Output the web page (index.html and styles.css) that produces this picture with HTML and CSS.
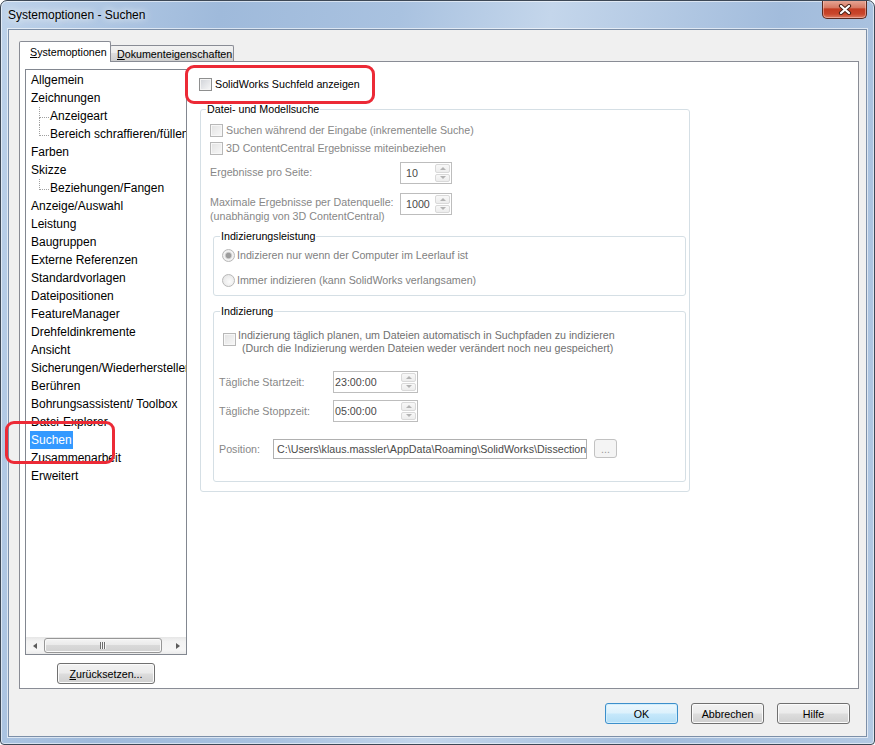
FILE: index.html
```html
<!DOCTYPE html>
<html lang="de">

<head>
  <meta charset="UTF-8">
  <title>Systemoptionen - Suchen</title>
  <link rel="stylesheet" href="styles.css">
</head>

<body>
  <div class="window">
    <div class="titlebar">
      <span class="title">Systemoptionen - Suchen</span>
      <button class="close-btn">
        <svg width="16" height="11" viewBox="0 0 16 11">
          <path d="M4 2 L12 9 M12 2 L4 9" stroke="#4b2318" stroke-width="4.2" stroke-linecap="round" fill="none"/>
          <path d="M4 2 L12 9 M12 2 L4 9" stroke="#ffffff" stroke-width="2.2" stroke-linecap="round" fill="none"/>
        </svg>
      </button>
    </div>

    <div class="client">
      <div class="tabs">
        <div class="tab tab-active"><u>S</u>ystemoptionen</div>
        <div class="tab tab-other"><u>D</u>okumenteigenschaften</div>
      </div>

      <div class="panel">
        <div class="nav">
          <div class="tree">
            <ul class="tree-list">
              <li>Allgemein</li>
              <li>Zeichnungen</li>
              <li class="tree-child has-next">Anzeigeart</li>
              <li class="tree-child">Bereich schraffieren/füllen</li>
              <li>Farben</li>
              <li>Skizze</li>
              <li class="tree-child">Beziehungen/Fangen</li>
              <li>Anzeige/Auswahl</li>
              <li>Leistung</li>
              <li>Baugruppen</li>
              <li>Externe Referenzen</li>
              <li>Standardvorlagen</li>
              <li>Dateipositionen</li>
              <li>FeatureManager</li>
              <li>Drehfeldinkremente</li>
              <li>Ansicht</li>
              <li>Sicherungen/Wiederherstellen</li>
              <li>Berühren</li>
              <li>Bohrungsassistent/ Toolbox</li>
              <li>Datei-Explorer</li>
              <li><span class="tree-selected">Suchen</span></li>
              <li>Zusammenarbeit</li>
              <li>Erweitert</li>
            </ul>
            <div class="hscroll">
              <span class="hs-arrow hs-left"></span>
              <div class="hs-track">
                <div class="hs-thumb"><span class="hs-grip"></span></div>
              </div>
              <span class="hs-arrow hs-right"></span>
            </div>
          </div>
          <button class="btn reset-btn"><u>Z</u>urücksetzen...</button>
        </div>

        <div class="page">
          <div class="check-row">
            <span class="cb"></span>
            <span>SolidWorks Suchfeld anzeigen</span>
          </div>

          <fieldset class="group group-outer">
            <legend class="group-title">Datei- und Modellsuche</legend>
            <div class="group-body outer-body">
              <div class="opt-row first-opt">
                <span class="cb cb-off"></span>
                <span>Suchen während der Eingabe (inkrementelle Suche)</span>
              </div>
              <div class="opt-row">
                <span class="cb cb-off"></span>
                <span>3D ContentCentral Ergebnisse miteinbeziehen</span>
              </div>

              <div class="field-row row-results">
                <span class="field-label label-wide">Ergebnisse pro Seite:</span>
                <div class="spin spin-small">
                  <span class="spin-value">10</span>
                  <span class="spin-btns"><span class="spin-btn spin-up"></span><span class="spin-btn spin-down"></span></span>
                </div>
              </div>
              <div class="field-row row-max">
                <span class="field-label label-wide label-two">Maximale Ergebnisse per Datenquelle:<br>(unabhängig von 3D ContentCentral)</span>
                <div class="spin spin-small">
                  <span class="spin-value">1000</span>
                  <span class="spin-btns"><span class="spin-btn spin-up"></span><span class="spin-btn spin-down"></span></span>
                </div>
              </div>

              <fieldset class="group group-inner group-perf">
                <legend class="group-title inner-title">Indizierungsleistung</legend>
                <div class="group-body perf-body">
                  <div class="opt-row radio-row first-radio">
                    <span class="rb rb-on"></span>
                    <span>Indizieren nur wenn der Computer im Leerlauf ist</span>
                  </div>
                  <div class="opt-row radio-row second-radio">
                    <span class="rb"></span>
                    <span>Immer indizieren (kann SolidWorks verlangsamen)</span>
                  </div>
                </div>
              </fieldset>

              <fieldset class="group group-inner group-index">
                <legend class="group-title inner-title">Indizierung</legend>
                <div class="group-body index-body">
                  <div class="sched-row">
                    <span class="cb cb-off"></span>
                    <span class="sched-text">Indizierung täglich planen, um Dateien automatisch in Suchpfaden zu indizieren<br><span class="sched-second">(Durch die Indizierung werden Dateien weder verändert noch neu gespeichert)</span></span>
                  </div>
                  <div class="field-row row-start">
                    <span class="field-label label-time">Tägliche Startzeit:</span>
                    <div class="spin spin-time">
                      <span class="spin-value">23:00:00</span>
                      <span class="spin-btns"><span class="spin-btn spin-up"></span><span class="spin-btn spin-down"></span></span>
                    </div>
                  </div>
                  <div class="field-row row-stop">
                    <span class="field-label label-time">Tägliche Stoppzeit:</span>
                    <div class="spin spin-time">
                      <span class="spin-value">05:00:00</span>
                      <span class="spin-btns"><span class="spin-btn spin-up"></span><span class="spin-btn spin-down"></span></span>
                    </div>
                  </div>
                  <div class="field-row row-pos">
                    <span class="field-label label-pos">Position:</span>
                    <div class="path-box">C:\Users\klaus.massler\AppData\Roaming\SolidWorks\Dissection</div>
                    <button class="small-btn">...</button>
                  </div>
                </div>
              </fieldset>
            </div>
          </fieldset>
        </div>
      </div>

      <div class="footer">
        <button class="btn footer-btn btn-default">OK</button>
        <button class="btn footer-btn">Abbrechen</button>
        <button class="btn footer-btn">Hilfe</button>
      </div>
    </div>

    <div class="mark mark-search"></div>
    <div class="mark mark-tree"></div>
  </div>
</body>

</html>
```

FILE: styles.css
```css
* {
  margin: 0;
  padding: 0;
  box-sizing: border-box;
}

body {
  font-family: "Liberation Sans", Arial, sans-serif;
  font-size: 10.7px;
  color: #000000;
  background: #ffffff;
}

button {
  font-family: inherit;
  font-size: inherit;
  color: inherit;
}

/* fenster rahmen */
.window {
  position: relative;
  width: 875px;
  height: 745px;
  border: 1px solid #3d4856;
  border-radius: 7px 7px 4px 4px;
  background: linear-gradient(100deg, #bdd2ea 0%, #9fbadb 22%, #a9c2e0 40%, #c4d6eb 55%, #a2bcdc 78%, #b3c9e3 100%);
  box-shadow: inset 0 0 0 1px rgba(255, 255, 255, 0.55);
  display: flex;
  flex-direction: column;
  overflow: hidden;
}

.titlebar {
  height: 28px;
  display: flex;
  justify-content: space-between;
  padding: 0 7px;
}

.title {
  font-size: 12px;
  line-height: 28px;
  text-shadow: 0 0 7px rgba(255, 255, 255, 0.95), 0 0 12px rgba(255, 255, 255, 0.7);
}

.close-btn {
  width: 45px;
  height: 19px;
  margin-top: -1px;
  border: 1px solid #5a2a20;
  border-top: none;
  border-radius: 0 0 5px 5px;
  background: linear-gradient(#e8ab9a, #d77a64 42%, #c33c22 50%, #c9462b 78%, #dc7c62);
  box-shadow: inset 0 0 0 1px rgba(255, 220, 210, 0.45);
  display: flex;
  align-items: center;
  justify-content: center;
}

.client {
  flex: 1;
  margin: 0 7px 7px;
  background: #f0f0f0;
  border: 1px solid #7c8fa8;
  box-shadow: 0 0 0 1px rgba(255, 255, 255, 0.6);
  padding: 11px 7px 0 10px;
  display: flex;
  flex-direction: column;
}

/* reiter */
.tabs {
  display: flex;
  align-items: flex-end;
  height: 21px;
  position: relative;
  z-index: 1;
}

.tab {
  border: 1px solid #898c95;
  border-bottom: none;
  border-radius: 2px 2px 0 0;
  white-space: nowrap;
}

.tab-active {
  width: 92px;
  height: 21px;
  background: #ffffff;
  line-height: 20px;
  padding-left: 10px;
}

.tab-other {
  width: 124px;
  height: 16px;
  margin-bottom: 1px;
  margin-left: -1px;
  line-height: 16px;
  padding-left: 6px;
  background: linear-gradient(#f2f2f2, #ebebeb 50%, #dddddd 50%, #cfcfcf);
}

.panel {
  margin-top: -1px;
  height: 628px;
  background: #ffffff;
  border: 1px solid #898c95;
  display: flex;
}

/* baum links */
.nav {
  width: 167px;
  padding: 7px 0 0 5px;
  display: flex;
  flex-direction: column;
  align-items: center;
}

.tree {
  width: 162px;
  height: 586px;
  border: 1px solid #828790;
  display: flex;
  flex-direction: column;
}

.tree-list {
  flex: 1;
  list-style: none;
  padding: 1px 0 0 5px;
  font-size: 12px;
  overflow: hidden;
  white-space: nowrap;
}

.tree-list > li {
  height: 18px;
  line-height: 18px;
  position: relative;
}

.tree-child {
  padding-left: 19px;
}

.tree-child::before {
  content: "";
  position: absolute;
  left: 8px;
  top: 0;
  width: 9px;
  height: 10px;
  border-left: 1px dotted #a0a0a0;
  border-bottom: 1px dotted #a0a0a0;
}

.has-next::after {
  content: "";
  position: absolute;
  left: 8px;
  top: 10px;
  bottom: 0;
  border-left: 1px dotted #a0a0a0;
}

.tree-selected {
  display: inline-block;
  background: #3399ff;
  color: #ffffff;
  padding: 0 1px;
  margin-left: -1px;
}

.hscroll {
  height: 17px;
  display: flex;
  background: linear-gradient(#e6e6e6, #f3f3f3 25%, #f6f6f6 75%, #ebebeb);
}

.hs-arrow {
  width: 17px;
  display: flex;
  align-items: center;
  justify-content: center;
}

.hs-left::before {
  content: "";
  border-style: solid;
  border-width: 3.5px 4px 3.5px 0;
  border-color: transparent #5c5c5c transparent transparent;
}

.hs-right::before {
  content: "";
  border-style: solid;
  border-width: 3.5px 0 3.5px 4px;
  border-color: transparent transparent transparent #5c5c5c;
}

.hs-track {
  flex: 1;
  padding: 1px 7px 1px 1px;
}

.hs-thumb {
  height: 100%;
  border: 1px solid #979797;
  border-radius: 3px;
  background: linear-gradient(#f4f4f4, #e9e9e9 50%, #d9d9d9 50%, #d1d1d1);
  box-shadow: inset 0 0 0 1px #f9f9f9;
  display: flex;
  align-items: center;
  justify-content: center;
}

.hs-grip {
  width: 6px;
  height: 7px;
  background: repeating-linear-gradient(90deg, #6e6e6e 0 1px, #f7f7f7 1px 2px);
}

/* buttons */
.btn {
  height: 21px;
  border: 1px solid #707070;
  border-radius: 3px;
  background: linear-gradient(#f2f2f2, #ebebeb 48%, #dddddd 52%, #cfcfcf);
  box-shadow: inset 0 0 0 1px #fbfbfb;
}

.reset-btn {
  width: 98px;
  margin-top: 8px;
}

.footer {
  display: flex;
  justify-content: flex-end;
  gap: 13px;
  margin-top: 14px;
  padding-right: 9px;
}

.footer-btn {
  width: 73px;
}

.btn-default {
  border-color: #3c8fcb;
  background: linear-gradient(#ecf7fd, #dcf1fc 48%, #c6e8fb 52%, #b3def6);
  box-shadow: inset 0 0 0 1px #d2eefc;
}

/* rechte seite */
.page {
  flex: 1;
  padding: 15px 0 0 12px;
}

.check-row {
  display: flex;
  align-items: center;
  height: 14px;
  gap: 3px;
}

.cb {
  width: 13px;
  height: 13px;
  flex-shrink: 0;
  border: 1px solid #8e8f8f;
  background: linear-gradient(135deg, #cfd2d7, #f8f8f8);
  box-shadow: inset 0 0 0 1px #f4f4f4;
}

.cb-off {
  border-color: #b8b8b8;
  background: linear-gradient(135deg, #e2e2e2, #f8f8f8);
  box-shadow: inset 0 0 0 1px #f7f7f7;
}

.rb {
  width: 13px;
  height: 13px;
  flex-shrink: 0;
  border-radius: 50%;
  border: 1px solid #b8b8b8;
  background: radial-gradient(circle at 60% 60%, #fbfbfb, #e1e1e1);
}

.rb-on {
  background: radial-gradient(circle, #9c9c9c 0 2.4px, #c8c8c8 3px, #f4f4f4 4.2px, #e3e3e3);
}

.group {
  border: 1px solid #d5dfe5;
  border-radius: 3px;
  padding: 0;
  min-width: 0;
}

.group-title {
  margin-left: 5px;
  padding: 0 1px;
  line-height: 16px;
  color: #000000;
}

.inner-title {
  margin-left: 6px;
}

.group-outer {
  width: 490px;
  margin: 10px 0 0 1px;
}

.outer-body {
  padding: 0 3px 9px 9px;
}

.opt-row {
  display: flex;
  align-items: center;
  height: 18px;
  gap: 3px;
  color: #878787;
}

.first-opt {
  margin-top: 4px;
}

.field-row {
  display: flex;
  align-items: flex-start;
}

.field-label {
  line-height: 14px;
  color: #878787;
  white-space: nowrap;
}

.label-wide {
  width: 190px;
  padding-top: 3px;
}

.label-two {
  padding-top: 2px;
}

.row-results {
  margin-top: 5px;
}

.row-max {
  margin-top: 9px;
}

.spin {
  display: flex;
  height: 22px;
  border: 1px solid #bdbdbd;
  background: #ffffff;
}

.spin-small {
  width: 52px;
}

.spin-time {
  width: 85px;
}

.spin-value {
  flex: 1;
  line-height: 20px;
  padding-left: 5px;
  color: #4a4a4a;
}

.spin-time .spin-value {
  padding-left: 1px;
}

.spin-btns {
  width: 16px;
  padding: 1px 1px 1px 0;
  display: flex;
  flex-direction: column;
  gap: 1px;
}

.spin-btn {
  flex: 1;
  border: 1px solid #d9d9d9;
  border-radius: 2px;
  background: linear-gradient(#f8f8f8, #ededed);
  display: flex;
  align-items: center;
  justify-content: center;
}

.spin-up::before {
  content: "";
  border-style: solid;
  border-width: 0 3px 3px 3px;
  border-color: transparent transparent #b3b3b3 transparent;
}

.spin-down::before {
  content: "";
  border-style: solid;
  border-width: 3px 3px 0 3px;
  border-color: #b3b3b3 transparent transparent transparent;
}

.group-inner {
  margin: 0 0 0 3px;
}

.group-perf {
  margin-top: 5px;
}

.perf-body {
  padding: 0 0 6px 8px;
}

.radio-row {
  gap: 2px;
  color: #7f7f7f;
}

.first-radio {
  margin-top: 2px;
}

.second-radio {
  margin-top: 7px;
}

.group-index {
  margin-top: 7px;
}

.index-body {
  padding: 0 0 22px 5px;
}

.sched-row {
  display: flex;
  align-items: flex-start;
  gap: 2px;
  margin: 10px 0 0 4px;
}

.sched-row .cb {
  margin-top: 4px;
}

.sched-text {
  line-height: 13px;
  color: #707070;
  white-space: nowrap;
}

.sched-second {
  padding-left: 4px;
}

.label-time {
  width: 114px;
  padding-top: 4px;
}

.row-start {
  margin-top: 16px;
}

.row-stop {
  margin-top: 7px;
}

.row-pos {
  margin-top: 17px;
}

.label-pos {
  width: 54px;
  padding-top: 3px;
}

.path-box {
  width: 314px;
  height: 20px;
  border: 1px solid #b0b0b0;
  padding-left: 3px;
  line-height: 18px;
  overflow: hidden;
  white-space: nowrap;
  color: #4a4a4a;
  background: #ffffff;
}

.small-btn {
  width: 23px;
  height: 19px;
  margin-left: 7px;
  border: 1px solid #c2c2c2;
  border-radius: 3px;
  background: #f4f4f4;
  color: #9a9a9a;
  line-height: 14px;
}

/* rote markierungen */
.mark {
  position: absolute;
  border: 3px solid #ec2a36;
  border-radius: 9px;
}

.mark-search {
  left: 184px;
  top: 64px;
  width: 190px;
  height: 39px;
}

.mark-tree {
  left: 4px;
  top: 420px;
  width: 110px;
  height: 43px;
}
```
